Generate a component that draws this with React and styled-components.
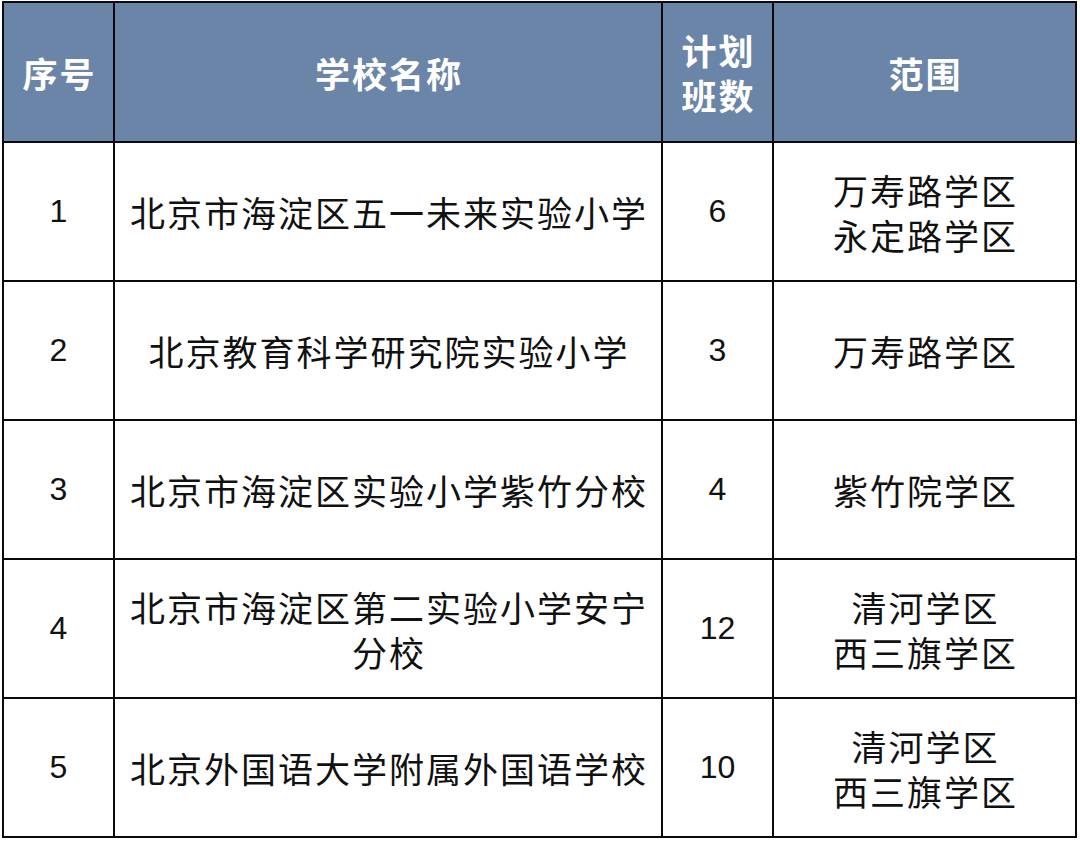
import React from 'react'
import styled, { createGlobalStyle } from 'styled-components'

const GlobalStyle = createGlobalStyle`
    html, body {
        margin: 0;
        padding: 0;
        background: #ffffff;
    }
`;

const Page = styled.div`
    padding: 1px 0 0 2px;
    width: 1080px;
    height: 841px;
    box-sizing: border-box;
    background: #fff;
`;

const Table = styled.div`
    display: grid;
    grid-template-columns: 109px 546px 109px 301px;
    grid-template-rows: 138px repeat(5, 137px);
    gap: 2px;
    padding: 2px;
    width: max-content;
    background: #0a0a0a;
    font-family: "Noto Sans CJK SC", "Liberation Sans", sans-serif;
`;

const Cell = styled.div`
    display: flex;
    align-items: center;
    justify-content: center;
    text-align: center;
    background: ${props => props.head ? '#6a85a7' : '#ffffff'};
    color: ${props => props.head ? '#ffffff' : '#111111'};
    font-weight: ${props => props.head ? 700 : 400};
    font-size: 35px;
    line-height: 45px;
    letter-spacing: 2px;
    padding-left: 2px;
    box-sizing: border-box;
`;

const Num = styled.span`
    font-family: "Liberation Sans", Arial, sans-serif;
    font-size: 32px;
    letter-spacing: 0;
    margin-left: -2px;
`;

const headers = ['序号', '学校名称', '计划\n班数', '范围'];

const rows = [
    ['1', '北京市海淀区五一未来实验小学', '6', '万寿路学区\n永定路学区'],
    ['2', '北京教育科学研究院实验小学', '3', '万寿路学区'],
    ['3', '北京市海淀区实验小学紫竹分校', '4', '紫竹院学区'],
    ['4', '北京市海淀区第二实验小学安宁\n分校', '12', '清河学区\n西三旗学区'],
    ['5', '北京外国语大学附属外国语学校', '10', '清河学区\n西三旗学区'],
];

function lines(text) {
    return text.split('\n').map((t, i) => <div key={i}>{t}</div>);
}

export default function App() {
    return (
        <Page>
            <GlobalStyle />
            <Table>
                {headers.map((h, i) => (
                    <Cell head key={'h' + i}><div>{lines(h)}</div></Cell>
                ))}
                {rows.map((r, ri) => (
                    <React.Fragment key={ri}>
                        <Cell><Num>{r[0]}</Num></Cell>
                        <Cell><div>{lines(r[1])}</div></Cell>
                        <Cell><Num>{r[2]}</Num></Cell>
                        <Cell><div>{lines(r[3])}</div></Cell>
                    </React.Fragment>
                ))}
            </Table>
        </Page>
    )
}
